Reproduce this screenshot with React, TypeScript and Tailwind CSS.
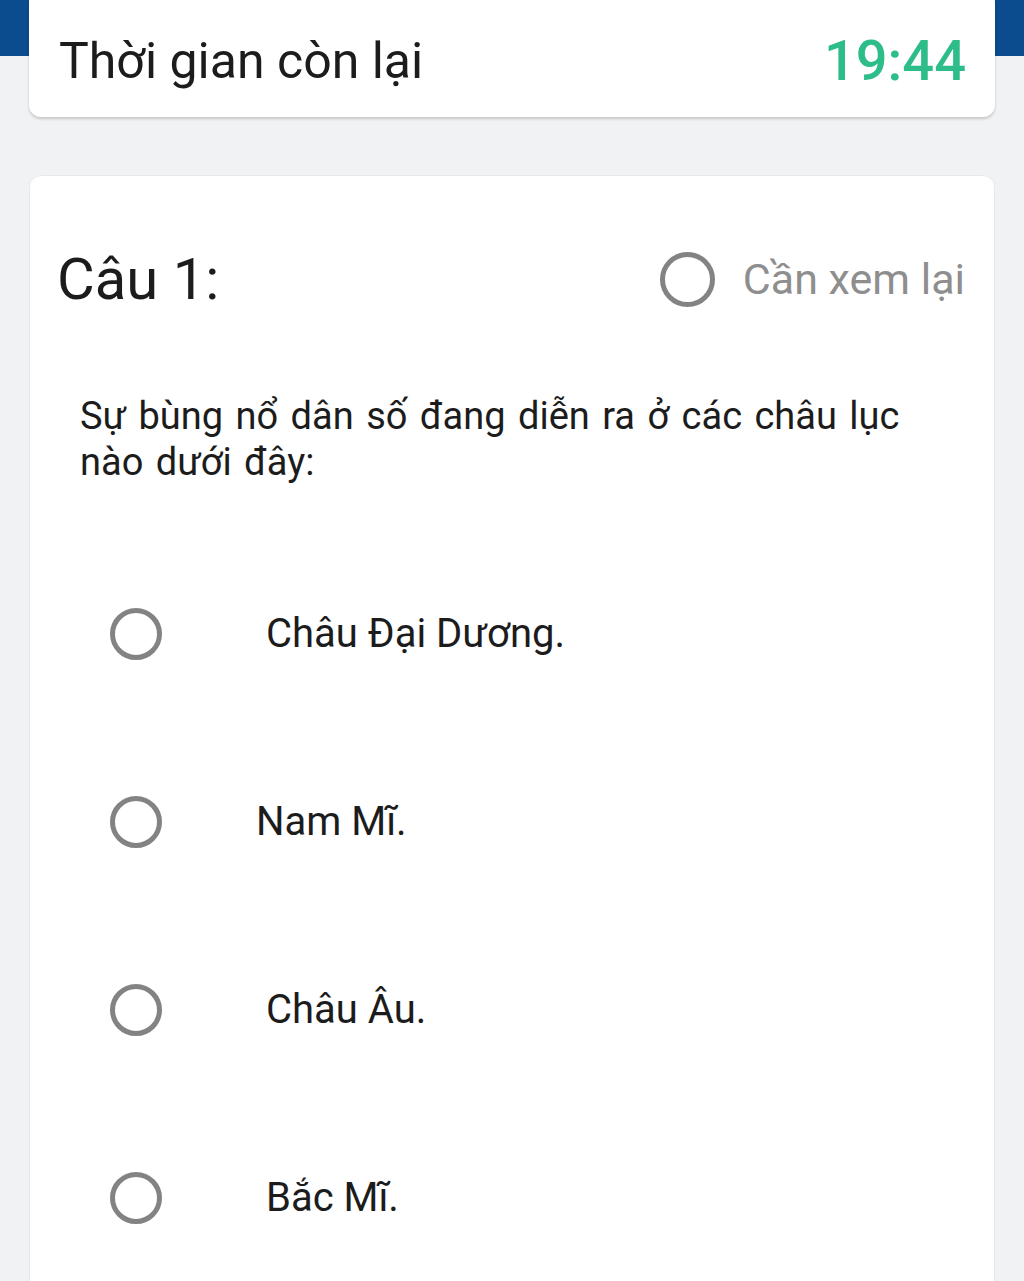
import React from 'react';

const options = [
  { id: 'a', label: 'Châu Đại Dương.', gap: 'ml-[104px]' },
  { id: 'b', label: 'Nam Mĩ.', gap: 'ml-[94px]' },
  { id: 'c', label: 'Châu Âu.', gap: 'ml-[104px]' },
  { id: 'd', label: 'Bắc Mĩ.', gap: 'ml-[104px]' },
];

const Radio = ({ size = 'w-[52px] h-[52px]' }: { size?: string }) => (
  <span className={`${size} shrink-0 rounded-full border-[5px] border-[#838383] bg-white`} />
);

export default function App() {
  return (
    <div
      className="min-h-screen overflow-hidden bg-[linear-gradient(to_bottom,#0b4c8e_56px,#f1f2f4_56px)] px-[29px] text-[#1c1c1c]"
      style={{ fontFamily: 'Roboto, "Noto Sans", Arial, sans-serif' }}
    >
      {/* timer card */}
      <div className="-mt-[10px] flex h-[127px] items-center justify-between rounded-[12px] bg-white pl-[30px] pr-[29px] pt-[14px] shadow-[0_2px_3px_rgba(0,0,0,0.18)]">
        <span className="text-[50px] leading-none">Thời gian còn lại</span>
        <span className="text-[56px] font-medium leading-none text-[#2dbd89]">19:44</span>
      </div>

      {/* question card */}
      <div className="mt-[58px] min-h-[1200px] rounded-[12px] border border-[#e8e9eb] bg-white pl-[27px] pr-[29px] pt-[73px]">
        <div className="flex h-[60px] items-center justify-between">
          <span className="text-[58px] leading-none">Câu 1:</span>
          <div className="flex items-center gap-[28px]">
            <Radio size="w-[55px] h-[55px]" />
            <span className="text-[43px] leading-none text-[#8e8e8e]">Cần xem lại</span>
          </div>
        </div>

        <p className="ml-[23px] mt-[84px] max-w-[840px] text-[38px] leading-[46px] [word-spacing:3px]">
          Sự bùng nổ dân số đang diễn ra ở các châu lục nào dưới đây:
        </p>

        <div className="mt-[55px] flex flex-col">
          {options.map((o) => (
            <div key={o.id} className="flex h-[188px] items-center pl-[53px]">
              <Radio />
              <span className={`${o.gap} text-[40px] leading-none`}>{o.label}</span>
            </div>
          ))}
        </div>
      </div>
    </div>
  );
}
